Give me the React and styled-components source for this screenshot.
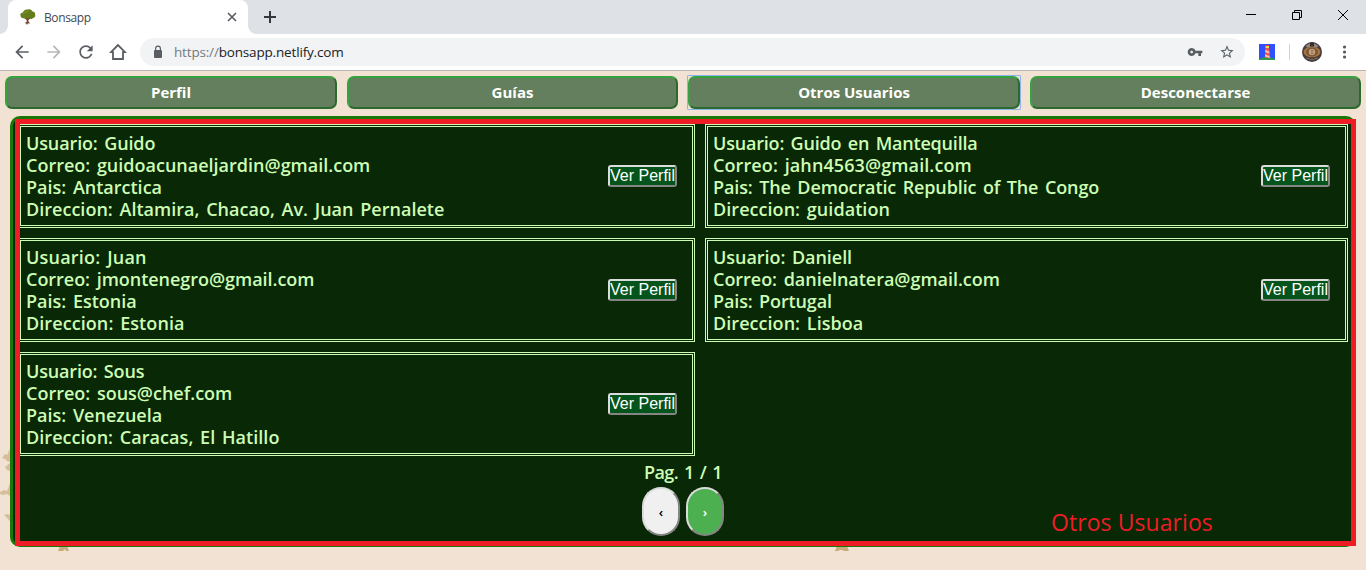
import React from "react";
import styled, { createGlobalStyle } from "styled-components";

const Global = createGlobalStyle`
  * { box-sizing: border-box; }
  html, body { margin: 0; padding: 0; height: 570px; overflow: hidden; }
  button { margin: 0; padding: 0; }
`;

const Browser = styled.div`
  width: 1366px;
  height: 570px;
  display: flex;
  flex-direction: column;
  overflow: hidden;
  font-family: "Open Sans", "Noto Sans", sans-serif;
`;

const TabStrip = styled.div`
  height: 34px;
  flex: none;
  display: flex;
  background: #dee1e6;
  padding-left: 8px;
`;

const Tab = styled.div`
  position: relative;
  width: 240px;
  height: 34px;
  display: flex;
  align-items: center;
  padding: 0 9px 0 12px;
  background: #fff;
  border-radius: 8px 8px 0 0;
  font-size: 12px;
  color: #45494d;
  &::before, &::after {
    content: "";
    position: absolute;
    bottom: 0;
    width: 8px;
    height: 8px;
  }
  &::before { left: -8px; background: radial-gradient(circle at 0 0, #dee1e6 7.5px, #fff 8px); }
  &::after { right: -8px; background: radial-gradient(circle at 100% 0, #dee1e6 7.5px, #fff 8px); }
`;

const TabTitle = styled.span`
  flex: 1;
  margin-left: 8px;
  letter-spacing: -0.4px;
`;

const Icon = styled.svg`
  display: block;
  flex: none;
  margin-left: ${(p) => p.$left || 0}px;
`;

const WindowControls = styled.div`
  margin-left: auto;
  display: flex;
  align-items: center;
  height: 29px;
  padding-right: 17px;
  gap: 34px;
`;

const Toolbar = styled.div`
  height: 37px;
  flex: none;
  display: flex;
  align-items: center;
  background: #fff;
  border-bottom: 1px solid #b9b4b6;
  padding: 0 13px 0 13px;
`;

const Address = styled.div`
  width: 1105px;
  height: 28px;
  margin-left: 13px;
  border-radius: 14px;
  background: #f1f3f4;
  display: flex;
  align-items: center;
  padding: 0 10px 0 12px;
  font-size: 13.5px;
  color: #202124;
`;

const Url = styled.span`
  flex: 1;
  margin-left: 10px;
  letter-spacing: -0.17px;
`;

const Scheme = styled.span`
  color: #75797e;
`;

const Divider = styled.div`
  width: 1px;
  height: 16px;
  margin-left: 14px;
  background: #cfd1d4;
`;

const Page = styled.div`
  position: relative;
  flex: 1;
  background: #f2e2d4;
`;

const Backdrop = styled.svg`
  position: absolute;
  left: 0;
  top: 0;
`;

const Nav = styled.nav`
  position: relative;
  display: grid;
  grid-template-columns: 332px 331px 332px 331px;
  gap: 10px;
  padding: 5px 5px 0;
`;

const NavButton = styled.button`
  position: relative;
  height: 33px;
  padding-bottom: 2px;
  border: 2px solid;
  border-color: #35a340 #2c692f #2c692f #35a340;
  border-radius: 7px;
  background: #647f5d;
  color: #fff;
  font: 700 15px "Open Sans", "Noto Sans", sans-serif;
  outline: none;
  &::after {
    content: "";
    display: ${(p) => (p.$focused ? "block" : "none")};
    position: absolute;
    inset: -3px;
    border: 1px solid #8db2ec;
    border-radius: 1px;
  }
`;

const Panel = styled.main`
  position: relative;
  width: 1346px;
  height: 431px;
  margin: 7px 0 0 10px;
  padding: 5px;
  border: 3px solid #1a7808;
  border-radius: 10px;
  background: #092805;
  color: #cdfdb4;
`;

const Users = styled.div`
  display: grid;
  grid-template-columns: 677px 643px;
  grid-auto-rows: 104px;
  gap: 10px;
`;

const Card = styled.article`
  display: flex;
  align-items: center;
  justify-content: space-between;
  border: 3px double #cdfdb4;
  padding: 5px 15px 5px 5px;
`;

const Line = styled.div`
  font: 600 18px/22px "Open Sans", "Noto Sans", sans-serif;
  letter-spacing: ${(p) => p.$track || 0}px;
  word-spacing: 2px;
  white-space: nowrap;
  width: max-content;
`;

const ViewButton = styled.button`
  width: 69px;
  height: 22px;
  border: 2px solid;
  border-color: #dcdcdc #858585 #858585 #dcdcdc;
  border-radius: 3px;
  background: #05541c;
  color: #fff;
  font: 16px/18px "Liberation Sans", Arial, sans-serif;
  white-space: nowrap;
  display: flex;
  justify-content: center;
`;

const PageLabel = styled.div`
  margin-top: 5px;
  display: flex;
  justify-content: center;
`;

const Pager = styled.div`
  display: flex;
  justify-content: center;
  gap: 6px;
  margin-top: 4px;
`;

const PageButton = styled.button`
  width: 38px;
  height: 49px;
  border: 2px solid;
  border-color: #dcdcdc #858585 #858585 #dcdcdc;
  border-radius: 19px;
  background: ${(p) => (p.$next ? "#4caf50" : "#f0f0f0")};
  color: ${(p) => (p.$next ? "#fff" : "#000")};
  font: 600 13.3px "Open Sans", sans-serif;
`;

const Highlight = styled.div`
  position: absolute;
  left: 15px;
  top: 48px;
  width: 1341px;
  height: 427px;
  border: 5px solid #ee1c25;
`;

const Note = styled.span`
  position: absolute;
  left: 1031px;
  top: 382px;
  color: #ee1c25;
  font: 23px/32px "Open Sans", sans-serif;
  letter-spacing: 0.07px;
  white-space: nowrap;
`;

const users = [
  [["Usuario: Guido", -0.13], ["Correo: guidoacunaeljardin@gmail.com", 0], ["Pais: Antarctica", 0], ["Direccion: Altamira, Chacao, Av. Juan Pernalete", 0.02]],
  [["Usuario: Guido en Mantequilla", -0.2], ["Correo: jahn4563@gmail.com", 0.1], ["Pais: The Democratic Republic of The Congo", -0.12], ["Direccion: guidation", 0.05]],
  [["Usuario: Juan", 0.2], ["Correo: jmontenegro@gmail.com", -0.03], ["Pais: Estonia", 0], ["Direccion: Estonia", 0.08]],
  [["Usuario: Daniell", -0.05], ["Correo: danielnatera@gmail.com", -0.03], ["Pais: Portugal", -0.13], ["Direccion: Lisboa", 0.05]],
  [["Usuario: Sous", -0.17], ["Correo: sous@chef.com", 0], ["Pais: Venezuela", 0], ["Direccion: Caracas, El Hatillo", 0.05]],
];

const Glyph = ({ d, color = "#5a5e63", size = 20, left = 0 }) => (
  <Icon width={size} height={size} viewBox="0 0 24 24" fill={color} $left={left}>
    <path d={d} />
  </Icon>
);

const Tree = () => (
  <Icon width="16" height="16" viewBox="0 0 16 16">
    <path d="M4.500 8.500L7 10.500M10.500 8.500L8 10.500" stroke="#6b3d26" strokeWidth="1.200" fill="none" />
    <path d="M.5 6.500C0 4.500 1.500 3.500 3 3.500c0-2 2.500-3.500 5-3 2-.8 4 .5 4.500 2 2 0 3 2 2.500 3 1 1.500-.5 3.500-2 3.500-1 1.500-3 1-4 0.300C7.500 10.300 5 10 4.300 9 2.500 10 .5 8.500.5 6.500z" fill="#657d1d" />
    <path d="M3 5q2-2.500 5-2.500" stroke="#7f962c" fill="none" />
    <path d="M6.800 9h1.500l.3 4 1.800 1.200L7.800 14.500 7 16l-.8-1.500L4.500 14l2.100-1z" fill="#734531" />
  </Icon>
);

export default function App() {
  return (
    <Browser>
      <Global />
      <TabStrip>
        <Tab>
          <Tree />
          <TabTitle>Bonsapp</TabTitle>
          <Icon width="14" height="14" viewBox="0 0 14 14" stroke="#5a5e63" strokeWidth="1.7"><path d="M3 3l8 8M11 3l-8 8" /></Icon>
        </Tab>
        <Icon $left={15} width="14" height="34" viewBox="0 0 14 34" stroke="#35383b" strokeWidth="2"><path d="M1 17h12M7 11v12" /></Icon>
        <WindowControls>
          <Icon width="12" height="12" viewBox="0 0 12 12" stroke="#000"><path d="M1 5.500h10" /></Icon>
          <Icon width="12" height="12" viewBox="0 0 12 12" stroke="#000" fill="none"><path d="M1.500 3.500h7v7h-7zM3.500 3.500v-2h7v7h-2" /></Icon>
          <Icon width="12" height="12" viewBox="0 0 12 12" stroke="#000"><path d="M1 1l10 10M11 1L1 11" /></Icon>
        </WindowControls>
      </TabStrip>
      <Toolbar>
        <Glyph size={20} left={-1} d="M20 11H7.830l5.590-5.590L12 4l-8 8 8 8 1.410-1.410L7.830 13H20v-2z" />
        <Glyph size={20} left={12} color="#b6b8ba" d="M12 4l-1.410 1.410L16.170 11H4v2h12.170l-5.580 5.590L12 20l8-8z" />
        <Glyph size={20} left={12} d="M17.650 6.350C16.200 4.900 14.210 4 12 4c-4.420 0-7.990 3.580-7.990 8s3.570 8 7.990 8c3.730 0 6.840-2.550 7.730-6h-2.080c-.82 2.330-3.040 4-5.650 4-3.310 0-6-2.690-6-6s2.690-6 6-6c1.660 0 3.140.69 4.220 1.780L13 11h7V4l-2.350 2.350z" />
        <Icon width="18" height="18" viewBox="0 0 18 18" fill="none" stroke="#5a5e63" strokeWidth="1.800" $left={13}><path d="M9 2L2 9.200h2V16h10V9.200h2z" /></Icon>
        <Address>
          <Icon width="12" height="14" viewBox="0 0 12 14"><rect x="2" y="5" width="8" height="8" rx="1" fill="#5a5e63" /><path d="M3.600 6V3.600a2.400 2.400 0 014.800 0V6" fill="none" stroke="#5a5e63" strokeWidth="1.200" /></Icon>
          <Url><Scheme>https://</Scheme>bonsapp.netlify.com</Url>
          <Glyph size={16} d="M12.650 10C11.830 7.670 9.610 6 7 6c-3.310 0-6 2.690-6 6s2.690 6 6 6c2.610 0 4.830-1.670 5.650-4H17v4h4v-4h2v-4H12.650zM7 14c-1.100 0-2-.9-2-2s.9-2 2-2 2 .9 2 2-.9 2-2 2z" />
          <Glyph size={16} left={16} d="M22 9.240l-7.190-.62L12 2 9.190 8.630 2 9.240l5.460 4.730L5.820 21 12 17.270 18.180 21l-1.630-7.030L22 9.240zM12 15.400l-3.760 2.270 1-4.280-3.320-2.880 4.380-.38L12 6.100l1.710 4.040 4.380.38-3.320 2.880 1 4.280L12 15.400z" />
        </Address>
        <Icon $left={14} width="16" height="16" viewBox="0 0 16 16">
          <rect width="16" height="16" fill="#304ffe" /><path d="M0 15q8-4 16 0v1H0z" fill="#2e9b4b" />
          <path d="M6.500 4h3.500l1 10H5.800z" fill="#ef5848" /><path d="M6.300 6l4 1.500v2L6 8zM6 10.500l4.600 1.500v2L6 12.500z" fill="#f6c2b4" /><path d="M6.500 2h3.500v2H6.500z" fill="#f8d94c" /><path d="M6.500 1h3.500v1H6.500z" fill="#e53935" />
        </Icon>
        <Divider />
        <Icon $left={12} width="20" height="20" viewBox="0 0 20 20">
          <circle cx="10" cy="10" r="10" fill="#4a3c36" /><path d="M3.500 4q6.500-6 13 0l-2 2Q10 3 5.500 6z" fill="#8c8583" /><path d="M8 .5h4v4H8z" fill="#39302d" /><ellipse cx="10" cy="10" rx="8.500" ry="5.300" fill="#a47445" /><ellipse cx="10" cy="10" rx="5.800" ry="4.400" fill="#7a512f" /><circle cx="10" cy="10" r="3.300" fill="#c2a183" /><path d="M9 8.500h2.500M9 10h2M9 11.500h2.500" stroke="#98704e" /><path d="M4 16q6 3 12 0" stroke="#77706d" fill="none" />
        </Icon>
        <Icon $left={20} width="4" height="16" viewBox="0 0 4 16" fill="#5a5e63"><circle cx="2.500" cy="3" r="1.600" /><circle cx="2.500" cy="8" r="1.600" /><circle cx="2.500" cy="13" r="1.600" /></Icon>
      </Toolbar>
      <Page>
        <Backdrop width="1366" height="499" viewBox="0 71 1366 499" fill="#c7ab7c">
          <path d="M2 458l3-4 2 1 3-6v13l-3-1-2-2zM5 467l5-4v8l-3-1zM0 492l4-2 3 1 3-8v13l-3-2-4 1-3-1zM4 515l3-1 3 1v6l-3-3z" opacity=".65" />
          <path d="M60 546h7l2 5h-3l-1-2-2 2h-5zM837 546h10l2 5h-5l-2-1h-2l-2 1h-3z" />
        </Backdrop>
        <Nav>
          <NavButton>Perfil</NavButton>
          <NavButton>Guías</NavButton>
          <NavButton $focused>Otros Usuarios</NavButton>
          <NavButton>Desconectarse</NavButton>
        </Nav>
        <Panel>
          <Users>
            {users.map((lines) => (
              <Card key={lines[0][0]}>
                <div>
                  {lines.map(([text, track]) => <Line key={text} $track={track}>{text}</Line>)}
                </div>
                <ViewButton>Ver Perfil</ViewButton>
              </Card>
            ))}
          </Users>
          <PageLabel><Line $track={-0.6}>Pag. 1 / 1</Line></PageLabel>
          <Pager>
            <PageButton>‹</PageButton>
            <PageButton $next>›</PageButton>
          </Pager>
        </Panel>
        <Highlight>
          <Note>Otros Usuarios</Note>
        </Highlight>
      </Page>
    </Browser>
  );
}
